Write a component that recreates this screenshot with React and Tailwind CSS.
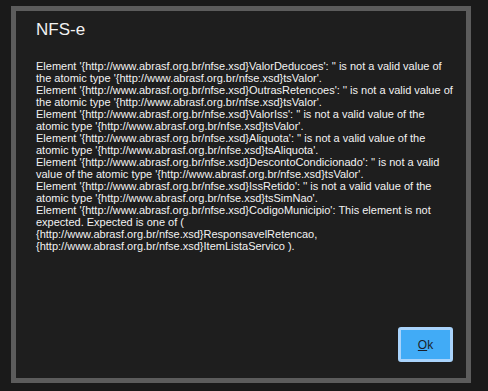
const ns = 'http://www.abrasf.org.br/nfse.xsd'

const errors = [
  `Element '{${ns}}ValorDeducoes': '' is not a valid value of the atomic type '{${ns}}tsValor'.`,
  `Element '{${ns}}OutrasRetencoes': '' is not a valid value of the atomic type '{${ns}}tsValor'.`,
  `Element '{${ns}}ValorIss': '' is not a valid value of the atomic type '{${ns}}tsValor'.`,
  `Element '{${ns}}Aliquota': '' is not a valid value of the atomic type '{${ns}}tsAliquota'.`,
  `Element '{${ns}}DescontoCondicionado': '' is not a valid value of the atomic type '{${ns}}tsValor'.`,
  `Element '{${ns}}IssRetido': '' is not a valid value of the atomic type '{${ns}}tsSimNao'.`,
  `Element '{${ns}}CodigoMunicipio': This element is not expected. Expected is one of ( {${ns}}ResponsavelRetencao, {${ns}}ItemListaServico ).`,
]

export default function App() {
  return (
    <div
      className="w-[488px] h-[391px] bg-[#1a1a1a] pt-[6px] pl-[11px]"
      style={{ fontFamily: '"Liberation Sans", Arial, sans-serif' }}
    >
      <div className="w-[460px] h-[377px] border-[5px] border-[#5c5c5c] bg-[#1e1e1e] flex flex-col">
        <div className="pt-[9px] pl-[20px] text-[17px] leading-[20px] text-[#f2f2f2]">NFS-e</div>

        <div className="mt-[20px] pl-[20px] pr-[8px] text-[11px] leading-[12px] text-[#f2f2f2]">
          {errors.map((e) => (
            <div key={e}>{e}</div>
          ))}
        </div>

        <div className="mt-auto flex justify-end pr-[13px] pb-[16px]">
          <button className="w-[55px] h-[35px] rounded-[3px] border-[3px] border-[#a9d3fb] bg-[#41abf6] text-[12px] text-[#1a1f2a] flex items-center justify-center">
            <span>
              <u>O</u>k
            </span>
          </button>
        </div>
      </div>
    </div>
  )
}
